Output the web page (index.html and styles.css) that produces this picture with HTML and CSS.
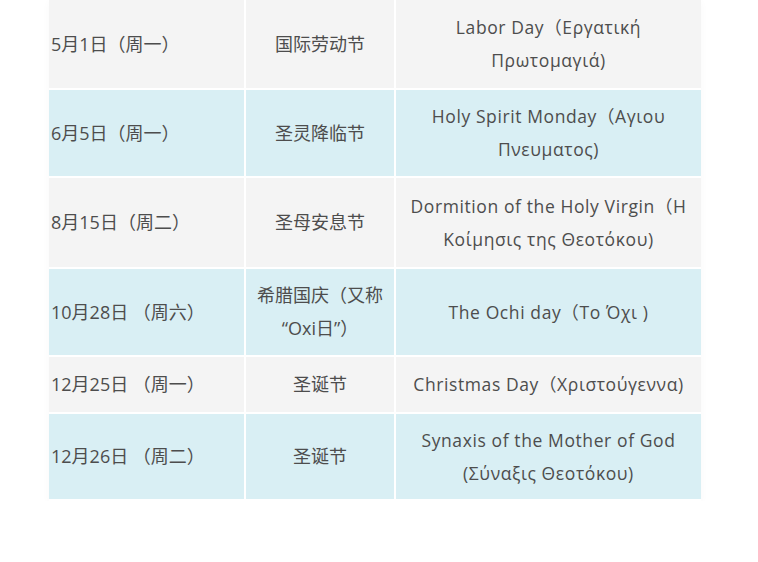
FILE: index.html
```html
<!DOCTYPE html>
<html lang="zh">
<head>
<meta charset="utf-8">
<title>希腊节假日</title>
<link rel="stylesheet" href="styles.css">
</head>
<body>
<div class="wrap">
<table class="holidays">
<colgroup>
<col class="c-date">
<col class="c-name">
<col class="c-en">
</colgroup>
<tbody>
<tr class="odd h88">
<td class="date">5月1日（周一）</td>
<td class="name">国际劳动节</td>
<td class="en">Labor Day（Εργατική Πρωτομαγιά)</td>
</tr>
<tr class="even h86">
<td class="date">6月5日（周一）</td>
<td class="name">圣灵降临节</td>
<td class="en">Holy Spirit Monday（Αγιου Πνευματος)</td>
</tr>
<tr class="odd h89">
<td class="date">8月15日（周二）</td>
<td class="name">圣母安息节</td>
<td class="en">Dormition of the Holy Virgin（Η Κοίμησις της Θεοτόκου)</td>
</tr>
<tr class="even h86">
<td class="date">10月28日 （周六）</td>
<td class="name">希腊国庆（又称“Oxi日”）</td>
<td class="en">The Ochi day（Το Όχι )</td>
</tr>
<tr class="odd h55">
<td class="date">12月25日 （周一）</td>
<td class="name">圣诞节</td>
<td class="en">Christmas Day（Χριστούγεννα)</td>
</tr>
<tr class="even h85">
<td class="date">12月26日 （周二）</td>
<td class="name">圣诞节</td>
<td class="en">Synaxis of the Mother of God (Σύναξις Θεοτόκου)</td>
</tr>
</tbody>
</table>
</div>
</body>
</html>
```
FILE: styles.css
```css
html, body {
  margin: 0;
  padding: 0;
  background: #ffffff;
}

.wrap {
  padding: 0 0 0 49px;
}

.holidays {
  width: 652px;
  border-collapse: collapse;
  table-layout: fixed;
  font-family: "Open Sans", "Noto Sans CJK SC", sans-serif;
  font-size: 18px;
  line-height: 33px;
  color: #4d4d4d;
  box-shadow: 0 2px 8px rgba(0, 0, 0, 0.03);
}

.c-date { width: 196px; }
.c-name { width: 150px; }
.c-en { width: 306px; }

.holidays td {
  border-right: 2px solid #ffffff;
  border-bottom: 2px solid #ffffff;
  vertical-align: middle;
  padding: 0 4px;
}

.holidays td:last-child { border-right: 0; }

.odd td { background: #f4f4f4; }
.even td { background: #d9eff4; }

.h89 td { height: 89px; }
.h88 td { height: 88px; }
.h86 td { height: 86px; }
.h85 td { height: 85px; }
.h55 td { height: 55px; }

.date {
  text-align: left;
  padding-left: 2px !important;
}

.name, .en {
  text-align: center;
}

.en {
  font-size: 17.5px;
  letter-spacing: 0.6px;
}
```
